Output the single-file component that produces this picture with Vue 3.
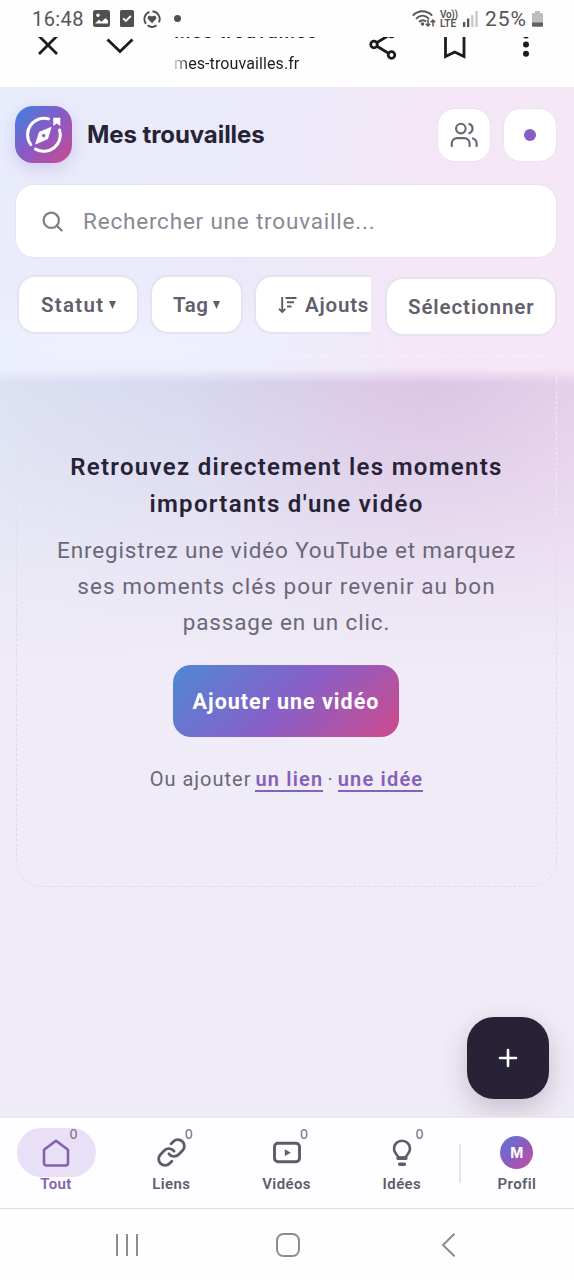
<script setup>
const tabs = [
  { id: 'tout', label: 'Tout', count: 0, active: true },
  { id: 'liens', label: 'Liens', count: 0 },
  { id: 'videos', label: 'Vidéos', count: 0 },
  { id: 'idees', label: 'Idées', count: 0 },
]
</script>

<template>
  <div class="screen">
    <div class="status">
      <span class="clock">16:48</span>
      <svg class="s-img" width="17" height="17" viewBox="0 0 17 17"><rect width="17" height="17" rx="2.5" fill="#505050" /><circle cx="5" cy="5.2" r="1.7" fill="#fff" /><path d="M2 13.5 6 9.8l2.6 2L12.4 8 15 10.6v2.9z" fill="#fff" /></svg>
      <svg class="s-check" width="14" height="17" viewBox="0 0 14 17"><rect width="14" height="17" rx="1.5" fill="#505050" /><path d="m3.2 8.4 2.6 2.6 5-5" fill="none" stroke="#fff" stroke-width="1.9" /></svg>
      <svg class="s-heart" width="18" height="18" viewBox="0 0 18 18"><path d="M9.5 1.3A7.8 7.8 0 0 1 16 12.300M13.5 15.400A7.8 7.8 0 0 1 4.500 15.300M3 13.800A7.8 7.8 0 0 1 6.4 1.8" fill="none" stroke="#505050" stroke-width="1.9" /><path d="M9 13.300 5.200 9.300C3.300 7 6.500 4.300 9 6.600c2.500-2.300 5.700.400 3.800 2.700z" fill="#505050" /></svg>
      <i class="s-dot"></i>
      <span class="grow"></span>
      <svg class="s-wifi" width="24" height="18" viewBox="0 0 24 18"><g fill="none" stroke="#555" stroke-width="1.8"><path d="M.8 5.600C6.500-.200 14.500-.200 20.200 5.600M4 8.800c4.200-4 9-4 13 0M7 12c2.500-2.300 4.900-2.300 7.200-.5" /></g><circle cx="10.600" cy="14" r="1.700" fill="#555" /><path d="M16 9.500v6.500m-2.200-2.200L16 16l2.200-2.200M21 16.500V10m-2.200 2.200L21 10l2.200 2.200" fill="none" stroke="#555" stroke-width="1.500" /></svg>
      <span class="volte"><b>Vo))</b><b class="lte">LTE</b></span>
      <svg class="s-signal" width="15" height="16" viewBox="0 0 15 16"><path d="M0 11h2.300v5H0zM4 7.500h2.300V16H4z" fill="#555" /><path d="M8.200 4h2.300v12H8.200zM12.400 0h2.300v16h-2.300z" fill="#c6c6c6" /></svg>
      <span class="pct">25%</span>
      <svg class="s-bat" width="11" height="16" viewBox="0 0 11 16"><path d="M3 0h5v2h2.200q.8 0 .8.8V12H0V2.800Q0 2 .8 2H3z" fill="#bdbdbd" /><path d="M0 11.500h11v3.300q0 1-1 1H1q-1 0-1-1z" fill="#606060" /></svg>
    </div>

    <div class="browser">
      <div class="browser-in">
        <svg class="b-close" width="22" height="22" viewBox="0 0 22 22"><path d="m2 2 18 18M20 2 2 20" /></svg>
        <svg class="b-down" width="28" height="16" viewBox="0 0 28 16"><path d="m1.500 1.500 12.500 12 12.500-12" /></svg>
        <div class="site"><b>Mes trouvailles</b><span>mes-trouvailles.fr</span></div>
        <svg class="b-share" width="28" height="32" viewBox="0 0 28 32"><circle cx="5" cy="16.500" r="3.300" /><circle cx="22.500" cy="5.500" r="3.300" /><circle cx="22.500" cy="27" r="3.300" /><path d="m8 14.500 11.500-7M8 18.300l11.500 6.900" /></svg>
        <svg class="b-mark" width="22" height="28" viewBox="0 0 22 28"><path d="M1.500 1.500h18.500v24L10.800 21l-9.300 4.500z" /></svg>
        <svg class="b-more" width="8" height="26" viewBox="0 0 8 26"><circle cx="4" cy="3.500" r="3" /><circle cx="4" cy="12.500" r="3" /><circle cx="4" cy="21.700" r="3" /></svg>
      </div>
    </div>

    <div class="page">
      <header class="top">
        <div class="brand">
          <div class="logo">
            <svg width="57" height="57" viewBox="0 0 57 57">
              <g fill="none" stroke="#fff" stroke-width="3" stroke-linecap="round">
                <path d="M33.500 12.900A16.500 16.500 0 0 0 15.800 38.600" />
                <path d="M44.600 24A16.500 16.500 0 0 1 20.500 43.100" />
              </g>
              <path d="M38.300 11.800h7v8.300l-3.500-2.700-3.500 2.700z" fill="#fff" />
              <path fill-rule="evenodd" d="M36.200 21.300 32.600 32.800 20.600 38 24.300 26.200zM28.700 27.500a2.100 2.100 0 1 0 0 4.200 2.100 2.100 0 0 0 0-4.200z" fill="#fff" stroke="#fff" stroke-width=".8" stroke-linejoin="round" />
            </svg>
          </div>
          <h1>Mes trouvailles</h1>
          <div class="sq">
            <svg width="28" height="28" viewBox="0 0 24 24" fill="none" stroke="#68666f" stroke-width="1.800" stroke-linecap="round"><circle cx="9.300" cy="6.500" r="4.100" /><path d="M1.500 21.500v-2.300a4.500 4.500 0 0 1 4.500-4.500h6.300a4.500 4.500 0 0 1 4.500 4.500v2.300M16.500 2.600a4.100 4.100 0 0 1 0 7.800M22.800 21.500v-2.300a4.500 4.500 0 0 0-3.200-4.300" /></svg>
          </div>
          <div class="sq"><i class="accent"></i></div>
        </div>

        <div class="search">
          <svg width="21" height="21" viewBox="0 0 22 22" fill="none" stroke="#7f7d88" stroke-width="2.300" stroke-linecap="round"><circle cx="9.700" cy="9.700" r="8" /><path d="m15.500 15.500 5 4.800" /></svg>
          <span>Rechercher une trouvaille...</span>
        </div>

        <div class="filters">
          <div class="strip">
            <div class="chip c1"><span>Statut</span><svg width="7" height="8" viewBox="0 0 7 8"><path d="M0 0h7L3.500 8z" /></svg></div>
            <div class="chip c2"><span>Tag</span><svg width="7" height="8" viewBox="0 0 7 8"><path d="M0 0h7L3.500 8z" /></svg></div>
            <div class="chip c3">
              <svg class="sort" width="20" height="18" viewBox="0 0 20 18"><path d="M4.200 1v15M1 12.800 4.200 16l3.200-3.200M7.500 2h11M9 6.300h7M9 10.500h4.500" fill="none" stroke="#5f5c6a" stroke-width="1.900" /></svg>
              <span>Ajouts</span>
            </div>
          </div>
          <div class="chip c4"><span>Sélectionner</span></div>
        </div>
      </header>

      <main class="empty">
        <h2><span>Retrouvez directement les moments</span><span>importants d'une vidéo</span></h2>
        <p><span>Enregistrez une vidéo YouTube et marquez</span><span class="p2">ses moments clés pour revenir au bon</span><span>passage en un clic.</span></p>
        <button class="cta">Ajouter une vidéo</button>
        <div class="alt"><span>Ou ajouter</span><a>un lien</a><span class="sep">·</span><a>une idée</a></div>
      </main>

      <button class="fab"><svg width="20" height="20" viewBox="0 0 20 20"><path d="M10 2v16M2 10h16" stroke="#fff" stroke-width="2.600" stroke-linecap="round" /></svg></button>
    </div>

    <nav class="tabs">
      <div v-for="t in tabs" :key="t.id" class="tab" :class="{ active: t.active }">
        <div class="pill">
          <svg v-if="t.id === 'tout'" width="30" height="30" viewBox="0 0 30 30"><path d="M3 11.800 15 2.800l12 9V25q0 2.500-2.500 2.500h-19Q3 27.500 3 25z" /></svg>
          <svg v-else-if="t.id === 'liens'" width="31" height="31" viewBox="0 0 24 24"><path stroke-width="2.200" d="M10 13a5 5 0 0 0 7.540.540l3-3a5 5 0 0 0-7.070-7.070l-1.720 1.710M14 11a5 5 0 0 0-7.540-.540l-3 3a5 5 0 0 0 7.070 7.070l1.710-1.710" /></svg>
          <svg v-else-if="t.id === 'videos'" width="30" height="30" viewBox="0 0 30 30"><rect x="2.500" y="5.300" width="25" height="18.500" rx="3.500" stroke-width="2.900" /><path d="m12.800 11.300 6 3.400-6 3.400z" class="play" /></svg>
          <svg v-else width="30" height="30" viewBox="0 0 30 30"><path d="M11.300 19.500C11 16.500 7 16 7 10.700a8 8 0 0 1 16 0c0 5.300-4 5.800-4.300 8.800z" /><path d="M11 20.300h8M12.600 26.300h4.800" class="base" /></svg>
          <em>{{ t.count }}</em>
        </div>
        <span>{{ t.label }}</span>
      </div>
      <i class="rule"></i>
      <div class="tab">
        <div class="pill"><b class="avatar">M</b></div>
        <span>Profil</span>
      </div>
    </nav>

    <div class="android">
      <svg width="24" height="24" viewBox="0 0 24 24"><path d="M2 1v22M12 1v22M22 1v22" /></svg>
      <svg width="26" height="26" viewBox="0 0 26 26"><rect x="2" y="2" width="22" height="22" rx="6.500" /></svg>
      <svg width="24" height="24" viewBox="0 0 24 24"><path d="M18.500.700 7 12l11.500 11.300" /></svg>
    </div>
  </div>
</template>

<style>
html, body { margin: 0; background: #fff; }
</style>

<style scoped>
.screen { width: 574px; height: 1280px; display: flex; flex-direction: column; overflow: hidden; background: #fefefe; font-family: Roboto, "Liberation Sans", sans-serif; color: #5f5c6a; }
.screen * { box-sizing: border-box; }
svg { display: block; flex: none; }
h1, h2, p { margin: 0; }
button { border: 0; padding: 0; font-family: inherit; }
.grow { flex: 1; }

.status { height: 37px; flex: none; display: flex; align-items: center; padding: 0 31px 0 32px; color: #555; }
.clock { font-size: 20px; letter-spacing: .4px; width: 61px; }
.s-check { margin-left: 10px; }
.s-heart { margin-left: 9px; }
.s-dot { width: 7px; height: 7px; border-radius: 50%; background: #505050; margin-left: 13px; }
.volte { display: flex; flex-direction: column; font-size: 10px; line-height: 9px; margin-left: 4px; width: 19px; white-space: nowrap; }
.volte b { font-weight: 600; letter-spacing: -.3px; }
.volte .lte { letter-spacing: 0; }
.s-signal { margin-left: 4px; }
.pct { font-size: 21px; margin-left: 7px; width: 47px; letter-spacing: .9px; }

.browser { height: 49px; flex: none; overflow: hidden; }
.browser-in { height: 58px; margin-top: -13px; display: flex; align-items: flex-start; }
.browser-in svg { fill: none; stroke: #1c1c1c; stroke-width: 2.800; }
.b-close { margin: 10px 0 0 37px; }
.b-down { margin: 14px 0 0 47px; }
.site { margin: -3px 0 0 40px; width: 195px; display: flex; flex-direction: column; white-space: nowrap; color: #1c1c1c; }
.site b { font-size: 19px; line-height: 22px; font-weight: 500; letter-spacing: .95px; }
.site span { font-size: 16px; line-height: 20px; margin-top: 11px; letter-spacing: .1px; background: linear-gradient(90deg, #ccc 0, #1c1c1c 16px); -webkit-background-clip: text; background-clip: text; color: transparent; }
.b-share { margin: 4px 0 0 0; }
.b-mark { margin: 7px 0 0 47px; }
.browser-in .b-more { margin: 8px 0 0 56px; fill: #1c1c1c; stroke: none; }

.page { position: relative; height: 1030px; flex: none; margin-top: 1px; background:
  linear-gradient(180deg, rgba(240,236,247,0) 290px, rgba(240,236,247,.25) 400px, #f0ecf7 600px),
  radial-gradient(ellipse 250px 340px at 430px 280px, rgba(219,190,226,.8), rgba(219,190,226,0)),
  radial-gradient(ellipse 330px 300px at 240px 250px, #d3d6f0, rgba(211,214,240,0)),
  linear-gradient(90deg, #e0e5f3, #ead8ee); }
.top { position: relative; z-index: 1; height: 291px; padding: 18px 17px 0 15px; }
.top::before { content: ""; position: absolute; inset: 0 0 -6px; z-index: -1; background:
  radial-gradient(ellipse 330px 60px at 130px 262px, rgba(240,243,255,.8), rgba(240,243,255,0)),
  linear-gradient(97deg, #e9ecfb 0%, #eaeafa 35%, #ede9f8 52%, #f4e6f6 72%, #f6e7f6 100%);
  -webkit-mask-image: linear-gradient(180deg, #000 calc(100% - 16px), transparent); mask-image: linear-gradient(180deg, #000 calc(100% - 16px), transparent); }
.top::after { content: ""; position: absolute; left: 290px; right: 30px; bottom: 21px; border-top: 1px dashed rgba(255,255,255,.45); }
.brand { display: flex; align-items: center; height: 59px; }
.logo { width: 57px; height: 57px; border-radius: 18px; background: linear-gradient(135deg, #3c82e2, #8a5ac4 50%, #cc4a8e); box-shadow: 0 6px 16px rgba(110,90,190,.2); }
h1 { font-family: Inter, sans-serif; font-weight: 750; font-size: 24px; letter-spacing: -.08px; color: #272336; margin-left: 15px; flex: 1; white-space: nowrap; }
.sq { width: 54px; height: 54px; border-radius: 18px; background: #fff; border: 1px solid #e9e3f2; margin-left: 12px; display: flex; align-items: center; justify-content: center; }
.accent { width: 12px; height: 12px; border-radius: 50%; background: #8460c2; }
.search { height: 74px; margin-top: 20px; border-radius: 19px; background: #fff; border: 1px solid #e6e2f0; display: flex; align-items: center; padding-left: 26px; color: #8b8893; font-size: 22.500px; letter-spacing: .8px; white-space: nowrap; }
.search span { margin-left: 20px; }
.filters { display: flex; margin: 17px 0 0 2px; align-items: flex-start; justify-content: space-between; }
.strip { width: 354px; display: flex; overflow: hidden; gap: 11px; }
.chip { height: 59px; flex: none; border: 2px solid #e6e2ef; border-radius: 18px; background: #fff; display: flex; align-items: center; font-size: 20.500px; font-weight: 600; letter-spacing: .9px; white-space: nowrap; color: #625f6c; fill: #625f6c; padding-left: 21px; }
.chip svg { margin-left: 5px; }
.c1 { width: 122px; padding-left: 22px; }
.c1 span { letter-spacing: 1.300px; }
.c2 { width: 93px; }
.c2 span { letter-spacing: .5px; }
.c3 { width: 190px; }
.c3 span { letter-spacing: .8px; }
.c3 .sort { margin: 0 7px 0 1px; }
.c4 { width: 172px; margin-top: 2px; }

.empty { position: relative; margin: -22px 17px 0 16px; height: 531px; display: flex; flex-direction: column; align-items: center; padding: 93px 0 0 0; white-space: nowrap; }
.empty::before { content: ""; position: absolute; inset: 0; border: 1.500px dashed #ded9e6; border-top-color: transparent; border-radius: 26px; -webkit-mask-image: linear-gradient(180deg, transparent 70px, #000 260px); mask-image: linear-gradient(180deg, transparent 70px, #000 260px); }
.empty::after { content: ""; position: absolute; right: 0; top: 20px; height: 140px; border-right: 1px dashed rgba(255,255,255,.5); }
h2 span, p span { display: block; text-align: center; }
h2 { font-size: 24px; line-height: 37px; font-weight: 600; color: #272336; letter-spacing: 1.300px; }
p { font-size: 22.500px; line-height: 36px; letter-spacing: .85px; margin-top: 9px; color: #6b6778; }
.p2 { letter-spacing: 1.050px; }
.cta { width: 226px; height: 72px; margin: 25px 1px 0 0; border-radius: 18px; color: #fff; font-size: 21.500px; font-weight: 700; letter-spacing: 1px; background: linear-gradient(135deg, #4f88d5, #8760c8 50%, #ce4a8c); }
.alt { display: flex; align-items: baseline; margin-top: 31px; font-size: 20px; line-height: 22px; letter-spacing: 1px; color: #6b6778; }
.alt a { color: #8460b8; font-weight: 600; border-bottom: 2px solid #8460b8; margin-left: 4px; letter-spacing: 1.200px; }
.alt .sep { margin-left: 4px; }

.fab { position: absolute; right: 25px; bottom: 18px; width: 82px; height: 82px; border-radius: 27px; background: #282236; display: flex; align-items: center; justify-content: center; box-shadow: 0 10px 28px rgba(40,34,54,.22); }

.tabs { position: relative; z-index: 2; height: 92px; flex: none; display: flex; background: #fefdff; border-bottom: 1px solid #dcdae2; border-top: 1px solid #ebe7f1; justify-content: space-between; padding: 10px 17.500px 0 16.500px; }
.tab { width: 79px; display: flex; flex-direction: column; align-items: center; font-size: 15px; font-weight: 600; letter-spacing: .4px; }
.pill { position: relative; width: 79px; height: 49px; border-radius: 25px; display: flex; align-items: center; justify-content: center; }
.pill svg { fill: none; stroke: #5f5c6a; stroke-width: 2.600; stroke-linecap: round; stroke-linejoin: round; }
.pill svg .play { fill: #5f5c6a; stroke: none; }
.pill svg .base { stroke-width: 3.400; }
.pill em { position: absolute; left: 53px; top: 0; font: 500 12.500px/14px Inter, sans-serif; color: #7d7a87; }
.tab > span { line-height: 16px; height: 16px; margin-top: -1px; }
.active { color: #8460b0; }
.active .pill { background: #e9e0f7; }
.active .pill svg { stroke: #8460b0; }
.rule { width: 2px; height: 39px; background: #e6e4ec; margin: 16px -19.750px 0 -18.750px; }
.avatar { width: 33px; height: 33px; border-radius: 50%; background: linear-gradient(135deg, #5b78d8, #8a5cc0 50%, #c84f98); color: #fff; font: 700 14px/33px Inter, sans-serif; text-align: center; }

.android { height: 71px; flex: none; display: flex; align-items: center; padding: 1px 114px 0 115px; justify-content: space-between; }
.android svg { fill: none; stroke: #8c8c8c; stroke-width: 2; }
</style>
